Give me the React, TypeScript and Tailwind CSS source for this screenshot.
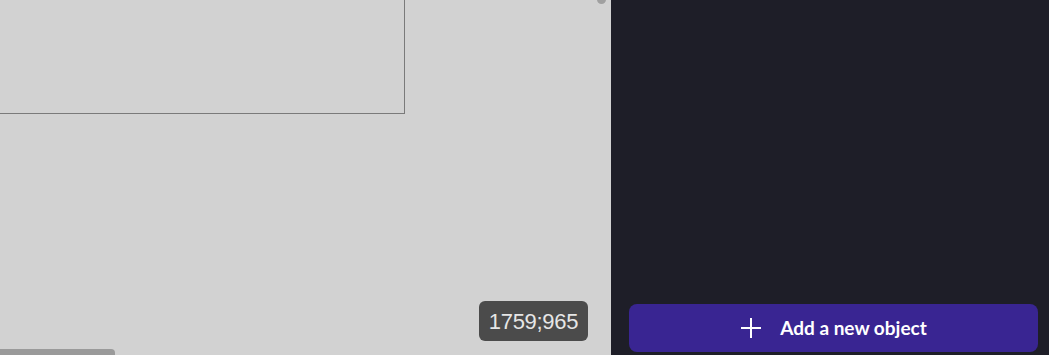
export default function App() {
  return (
    <div className="flex h-[355px] w-[1049px] overflow-hidden" style={{ fontFamily: "'Liberation Sans', Arial, sans-serif" }}>
      <div className="relative flex-1 bg-[#d2d2d2]">
        <div className="h-[114px] w-[405px] border-b border-r border-[#7a7a7a]" />
        <div className="absolute right-[5px] top-[-5px] h-[9px] w-[9px] rounded-full bg-[#a0a0a0]" />
        <div className="absolute bottom-[-4px] left-0 h-[10px] w-[115px] rounded-r-[4px] bg-[#9a9a9a]" />
        <div className="absolute left-[479px] top-[301px] flex h-[40px] w-[109px] items-center justify-center rounded-[6px] bg-[#4b4b4b] text-[22px] tracking-[-0.3px] text-[#e6e6e6]">
          1759;965
        </div>
      </div>
      <div className="flex w-[438px] flex-col justify-end bg-[#1e1e28] pb-[3px] pl-[18px] pr-[11px]">
        <button className="flex h-[48px] w-full items-center justify-center gap-[18px] rounded-[8px] bg-[#392592] text-white" style={{ fontFamily: "Lato, sans-serif" }}>
          <svg width="22" height="22" viewBox="0 0 22 22" fill="none" stroke="white" strokeWidth="2">
            <path d="M11 1v20M1 11h20" />
          </svg>
          <span className="text-[19px] font-bold">Add a new object</span>
        </button>
      </div>
    </div>
  );
}
